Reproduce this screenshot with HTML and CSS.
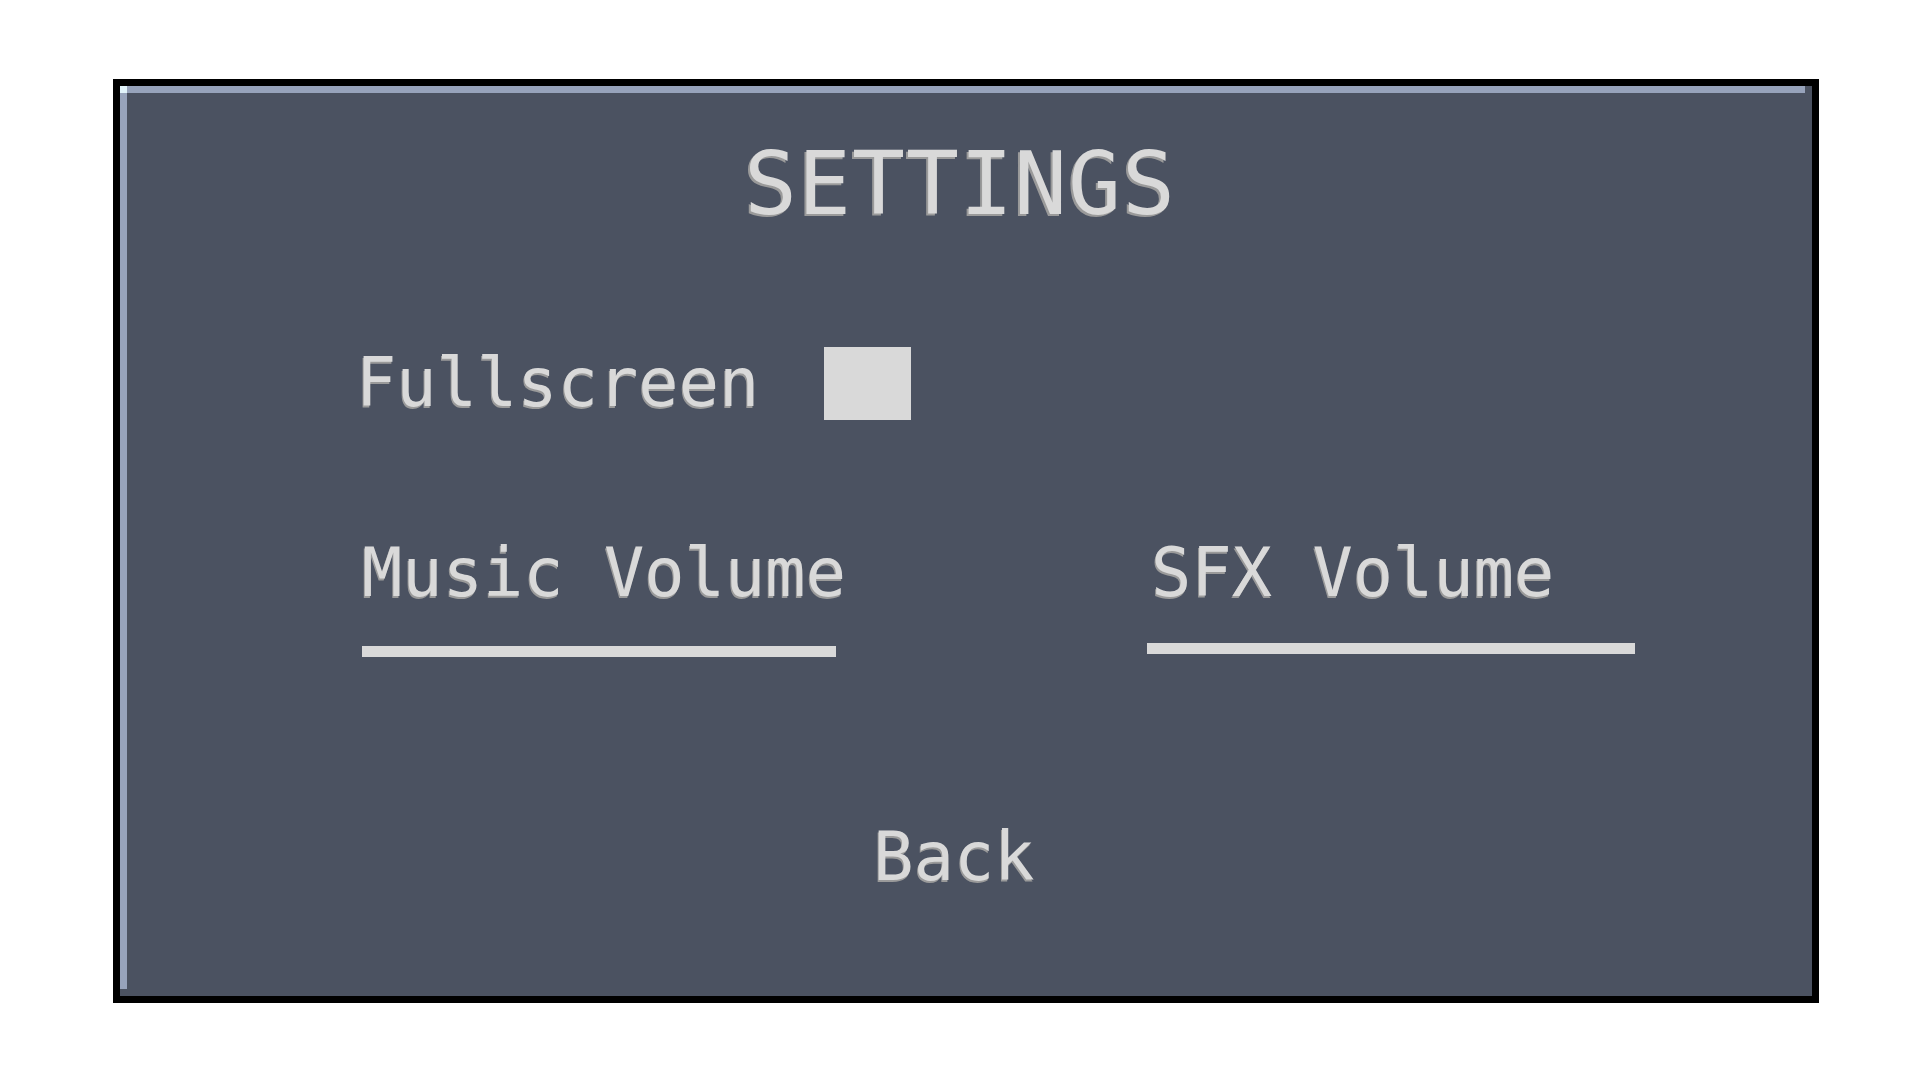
FILE: index.html
```html
<!DOCTYPE html>
<html lang="en">
<head>
<meta charset="utf-8">
<title>Settings</title>
<link rel="stylesheet" href="styles.css">
</head>
<body>
<main class="panel">
  <h1 class="title">SETTINGS</h1>
  <div class="fullscreen-row">
    <span class="label">Fullscreen</span>
    <span class="checkbox"></span>
  </div>
  <div class="volume-row">
    <div class="volume-col">
      <span class="label">Music Volume</span>
      <div class="bar bar-music"></div>
    </div>
    <div class="volume-col volume-col-right">
      <span class="label label-sfx">SFX Volume</span>
      <div class="bar bar-sfx"></div>
    </div>
  </div>
  <div class="back">Back</div>
</main>
</body>
</html>
```
FILE: styles.css
```css
html, body {
  margin: 0;
  padding: 0;
  background: #ffffff;
}

body {
  padding: 79px 0 0 113px;
  font-family: "DejaVu Sans Mono", "Liberation Mono", monospace;
  color: #d9d9d9;
}

.panel {
  box-sizing: border-box;
  width: 1706px;
  height: 924px;
  border: 7px solid #000000;
  background-color: #4b5261;
  background-image:
    linear-gradient(#e2f4fb, #e2f4fb),
    linear-gradient(#97a3bb, #97a3bb),
    linear-gradient(#97a3bb, #97a3bb);
  background-size:
    7px 7px,
    calc(100% - 7px) 7px,
    7px calc(100% - 7px);
  background-position: 0 0, 0 0, 0 0;
  background-repeat: no-repeat;
  display: flex;
  flex-direction: column;
  padding-top: 54px;
}

.title {
  margin: 0 12px 0 0;
  align-self: center;
  font-size: 88px;
  line-height: 88px;
  font-weight: normal;
  letter-spacing: 1px;
  text-shadow: -2px 2px 0 #9a9a9a;
}

.fullscreen-row {
  display: flex;
  align-items: center;
  margin-top: 119px;
  padding-left: 236px;
  gap: 65px;
}

.label {
  font-size: 67px;
  line-height: 67px;
  white-space: pre;
  text-shadow: -1px 2px 0 #9a9a9a;
}

.checkbox {
  width: 87px;
  height: 73px;
  background: #d9d9d9;
}

.volume-row {
  display: flex;
  align-items: flex-start;
  margin-top: 120px;
  padding-left: 242px;
  gap: 301px;
}

.volume-col {
  display: flex;
  flex-direction: column;
}

.label-sfx {
  margin-left: 4px;
}

.bar {
  height: 11px;
  background: #d9d9d9;
}

.bar-music {
  margin-top: 39px;
  width: 474px;
}

.bar-sfx {
  margin-top: 36px;
  width: 488px;
}

.back {
  align-self: center;
  margin: 167px 24px 0 0;
  font-size: 67px;
  line-height: 67px;
  text-shadow: -1px 2px 0 #9a9a9a;
}
```
